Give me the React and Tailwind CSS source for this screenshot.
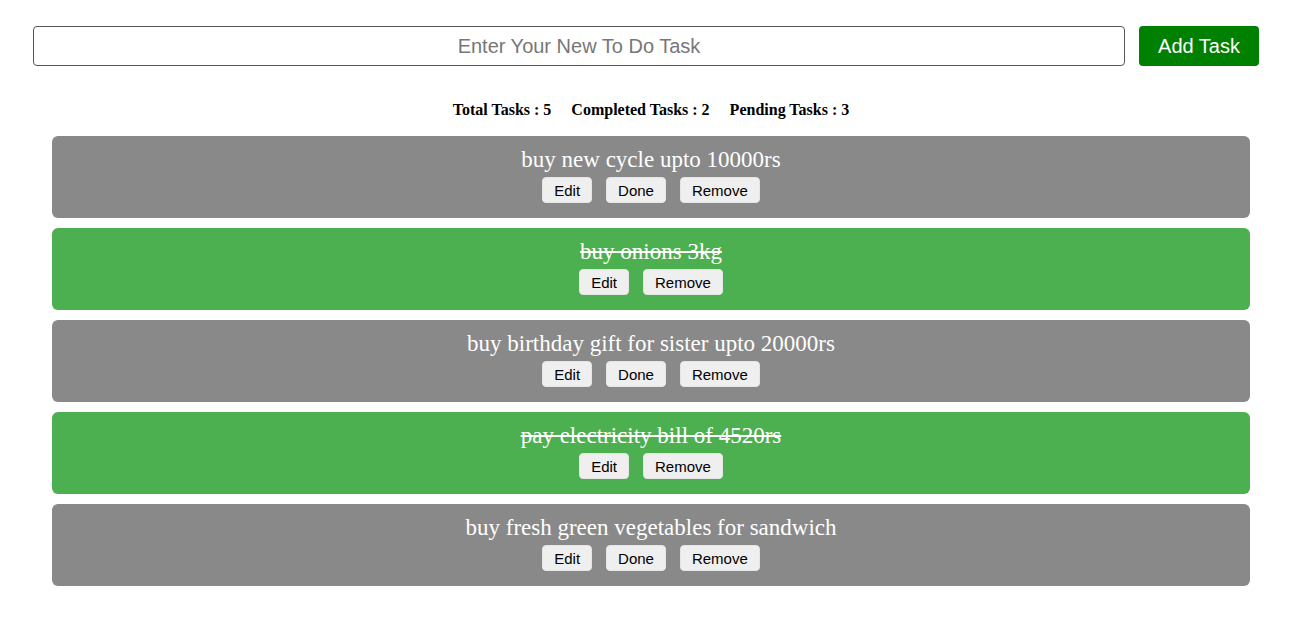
import { useState } from "react";

const initialTasks = [
    { id: 1, text: "buy new cycle upto 10000rs", done: false },
    { id: 2, text: "buy onions 3kg", done: true },
    { id: 3, text: "buy birthday gift for sister upto 20000rs", done: false },
    { id: 4, text: "pay electricity bill of 4520rs", done: true },
    { id: 5, text: "buy fresh green vegetables for sandwich", done: false },
];

const btn =
    "h-[26px] px-[11px] bg-[#efefef] rounded-[4px] text-[15px] text-black border border-[#e6e6e6] font-['Liberation_Sans',Arial,sans-serif] leading-none";

const App = () => {
    const [tasks, setTasks] = useState(initialTasks);
    const [input, setInput] = useState("");

    const completed = tasks.filter((t) => t.done).length;

    const addTask = () => {
        if (!input.trim()) return;
        setTasks([...tasks, { id: Date.now(), text: input, done: false }]);
        setInput("");
    };

    return (
        <div className="min-h-screen bg-white pt-[26px]">
            <div className="flex gap-[14px] pl-[33px] pr-[32px]">
                <input
                    type="text"
                    placeholder="Enter Your New To Do Task"
                    value={input}
                    onChange={(e) => setInput(e.target.value)}
                    className="flex-1 h-10 border border-[#555] rounded-[4px] text-center text-[20px] font-['Liberation_Sans',Arial,sans-serif] placeholder:text-[#777] outline-none"
                />
                <button
                    onClick={addTask}
                    className="w-[120px] h-10 bg-[#008000] text-white rounded-[4px] text-[20px] font-['Liberation_Sans',Arial,sans-serif]"
                >
                    Add Task
                </button>
            </div>

            <div className="ml-[52px] w-[1198px] mt-[35px] flex justify-center gap-5 text-[16px] font-bold text-black font-['Liberation_Serif','Times_New_Roman',serif] leading-[18px]">
                <span>Total Tasks : {tasks.length}</span>
                <span>Completed Tasks : {completed}</span>
                <span>Pending Tasks : {tasks.length - completed}</span>
            </div>

            <div className="ml-[52px] w-[1198px] mt-[17px] flex flex-col gap-[10px]">
                {tasks.map((task) => (
                    <div
                        key={task.id}
                        className={`h-[82px] rounded-[6px] flex flex-col items-center pt-[11px] ${
                            task.done ? "bg-[#4caf50]" : "bg-[#898989]"
                        }`}
                    >
                        <p
                            className={`text-white text-[23px] leading-[26px] font-['Liberation_Serif','Times_New_Roman',serif] ${
                                task.done ? "line-through" : ""
                            }`}
                        >
                            {task.text}
                        </p>
                        <div className="flex gap-[14px] mt-[4px]">
                            <button className={btn}>Edit</button>
                            {!task.done && (
                                <button
                                    className={btn}
                                    onClick={() =>
                                        setTasks(tasks.map((t) => (t.id === task.id ? { ...t, done: true } : t)))
                                    }
                                >
                                    Done
                                </button>
                            )}
                            <button
                                className={btn}
                                onClick={() => setTasks(tasks.filter((t) => t.id !== task.id))}
                            >
                                Remove
                            </button>
                        </div>
                    </div>
                ))}
            </div>
        </div>
    );
};

export default App;
